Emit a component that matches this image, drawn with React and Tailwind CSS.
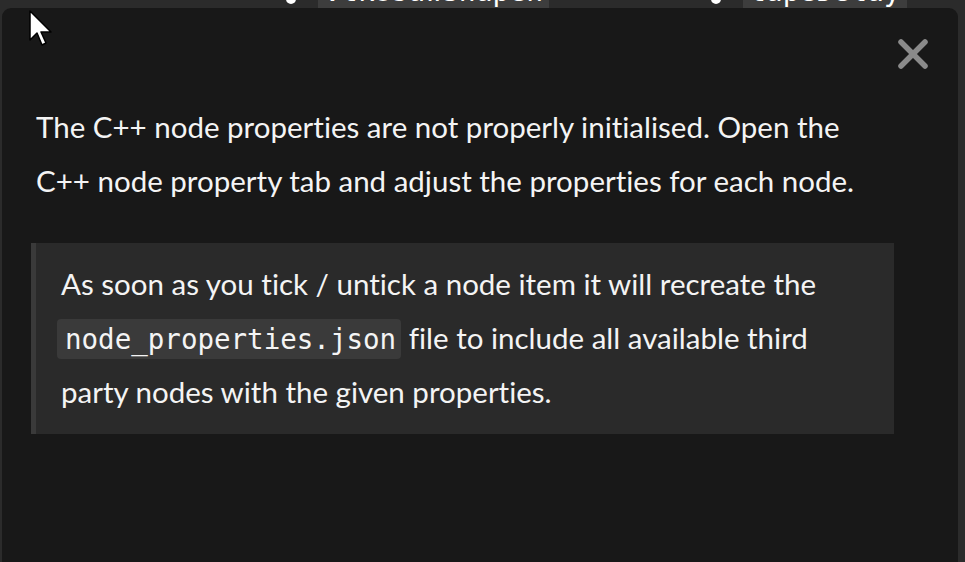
import { X } from 'lucide-react';

function Cursor() {
  return (
    <svg className="absolute left-[28px] top-[10px]" width="26" height="40" viewBox="0 0 26 40">
      <path d="M2 1 L2 30 L9 23 L14 35 L18 33 L13 22 L23 22 Z" fill="#ffffff" stroke="#000000" strokeWidth="1.5" strokeLinejoin="round" />
    </svg>
  );
}

function App() {
  return (
    <div className="relative w-[965px] h-[562px] overflow-hidden bg-[#2b2b2b] font-['Lato','Noto_Sans',sans-serif] [font-variant-ligatures:none]">
      {/* page behind the dialog */}
      <div className="flex -mt-[26px] text-white">
        <div className="flex items-end gap-[22px] pl-[286px] w-[705px]">
          <span className="mb-[6px] w-[10px] h-[10px] rounded-full bg-white" />
          <code className="bg-[#3d3d3d] px-[6px] font-['DejaVu_Sans_Mono',monospace] text-[28px] leading-[36px]">vtkUsawShapen</code>
        </div>
        <div className="flex items-end gap-[22px] pl-[6px]">
          <span className="mb-[6px] w-[10px] h-[10px] rounded-full bg-white" />
          <code className="bg-[#3d3d3d] px-[6px] font-['DejaVu_Sans_Mono',monospace] text-[28px] leading-[36px]">tapeDelay</code>
        </div>
      </div>

      {/* dialog */}
      <div className="absolute left-[2px] top-[8px] right-[7px] bottom-[-40px] rounded-[9px] bg-[#181818] pl-[29px] pr-[64px] pt-[92px] text-[#f4f4f4]">
        <button className="absolute right-[21px] top-[22px] text-[#8a8a8a]">
          <X size={48} strokeWidth={2.75} />
        </button>
        <p className="pl-[5px] text-[29.5px] leading-[54px]">
          The C++ node properties are not properly initialised. Open the C++ node property tab and adjust the properties for each node.
        </p>
        <blockquote className="mt-[35px] border-l-[5px] border-[#3a3a3a] bg-[#2a2a2a] pl-[25px] pr-[20px] pt-[14px] pb-[15px] text-[29.5px] leading-[54px]">
          As soon as you tick / untick a node item it will recreate the{' '}
          <code className="-ml-[4px] rounded-[4px] bg-[#3a3a3a] pl-[8px] pr-[5px] py-[4px] font-['DejaVu_Sans_Mono',monospace] text-[27.5px] leading-none">node_properties.json</code>{' '}
          file to include all available third party nodes with the given properties.
        </blockquote>
      </div>

      <Cursor />
    </div>
  );
}

export default App;
